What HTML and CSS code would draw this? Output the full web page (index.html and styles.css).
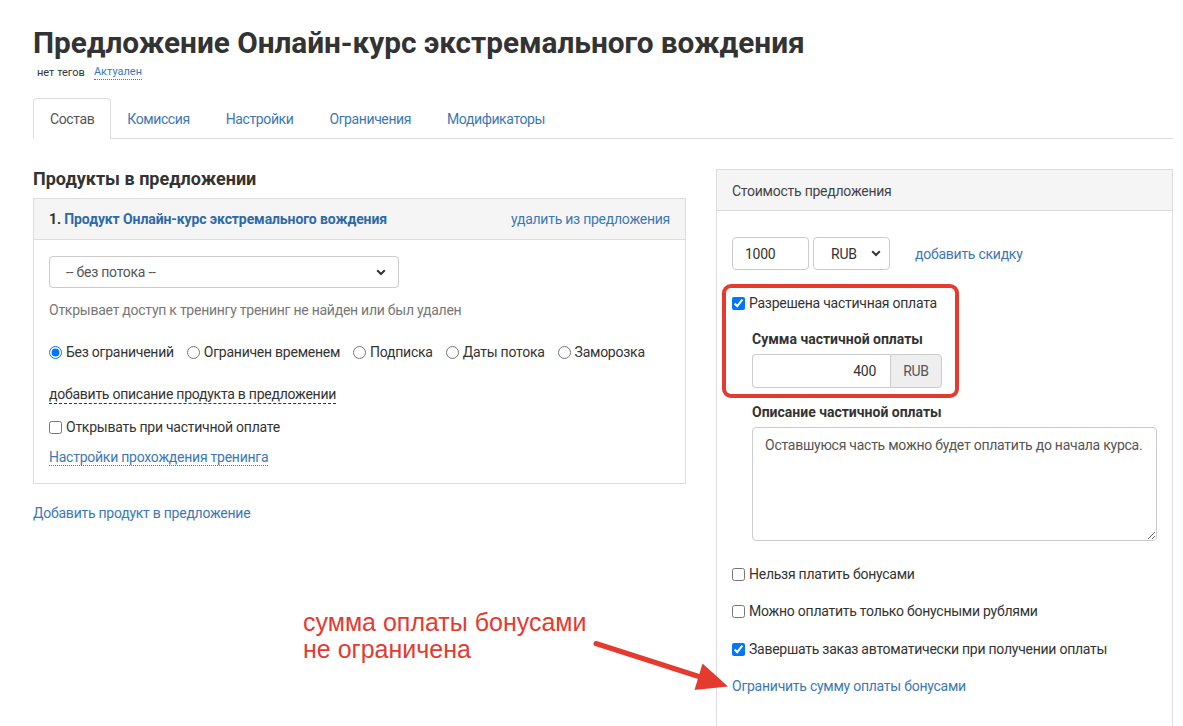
FILE: index.html
```html
<!DOCTYPE html>
<html lang="ru">
<head>
<meta charset="utf-8">
<title>Предложение</title>
<link rel="stylesheet" href="styles.css">
</head>
<body>
<div class="page">
  <h1 class="title">Предложение Онлайн-курс экстремального вождения</h1>
  <div class="tags"><span class="notags">нет тегов</span><a class="status">Актуален</a></div>

  <ul class="tabs">
    <li class="tab active">Состав</li>
    <li class="tab">Комиссия</li>
    <li class="tab">Настройки</li>
    <li class="tab">Ограничения</li>
    <li class="tab">Модификаторы</li>
  </ul>

  <div class="columns">
    <div class="left">
      <h3 class="section-title">Продукты в предложении</h3>
      <div class="panel">
        <div class="panel-heading product-heading">
          <span class="ph-title">1. <a class="prod-link">Продукт Онлайн-курс экстремального вождения</a></span>
          <a class="link">удалить из предложения</a>
        </div>
        <div class="panel-body product-body">
          <div class="select wide-select"><span>-- без потока --</span>
            <svg class="chev" width="10" height="7" viewBox="0 0 10 7"><path d="M1.2 1.3 L5 5 L8.8 1.3" fill="none" stroke="#333" stroke-width="2"/></svg>
          </div>
          <p class="help">Открывает доступ к тренингу тренинг не найден или был удален</p>
          <div class="radios">
            <label class="radio"><input type="radio" name="r" checked>Без ограничений</label>
            <label class="radio"><input type="radio" name="r">Ограничен временем</label>
            <label class="radio"><input type="radio" name="r">Подписка</label>
            <label class="radio"><input type="radio" name="r">Даты потока</label>
            <label class="radio"><input type="radio" name="r">Заморозка</label>
          </div>
          <div class="row-dashed"><a class="dashed">добавить описание продукта в предложении</a></div>
          <label class="check check-left"><input type="checkbox">Открывать при частичной оплате</label>
          <div class="row-dotted"><a class="dotted">Настройки прохождения тренинга</a></div>
        </div>
      </div>
      <a class="link add-link">Добавить продукт в предложение</a>
    </div>

    <div class="right">
      <div class="panel price-panel">
        <div class="panel-heading price-heading">Стоимость предложения</div>
        <div class="panel-body price-body">
          <div class="price-row">
            <div class="inp price-inp">1000</div>
            <div class="select cur-select"><span>RUB</span>
              <svg class="chev" width="10" height="7" viewBox="0 0 10 7"><path d="M1.2 1.3 L5 5 L8.8 1.3" fill="none" stroke="#333" stroke-width="2"/></svg>
            </div>
            <a class="link discount">добавить скидку</a>
          </div>
          <label class="check partial"><input type="checkbox" checked>Разрешена частичная оплата</label>
          <div class="sub">
            <div class="lbl lbl-sum">Сумма частичной оплаты</div>
            <div class="input-group">
              <div class="ig-inp">400</div>
              <div class="addon">RUB</div>
            </div>
            <div class="lbl lbl-desc">Описание частичной оплаты</div>
            <textarea class="ta">Оставшуюся часть можно будет оплатить до начала курса.</textarea>
          </div>
          <label class="check bonus1"><input type="checkbox">Нельзя платить бонусами</label>
          <label class="check bonus2"><input type="checkbox">Можно оплатить только бонусными рублями</label>
          <label class="check bonus3"><input type="checkbox" checked>Завершать заказ автоматически при получении оплаты</label>
          <div class="limit-row"><a class="link">Ограничить сумму оплаты бонусами</a></div>
        </div>
      </div>
    </div>
  </div>

  <div class="highlight"></div>
  <div class="note">сумма оплаты бонусами<br>не ограничена</div>
  <svg class="arrow" width="150" height="70" viewBox="590 630 150 70">
    <line x1="596" y1="643.5" x2="705" y2="678.5" stroke="#e53a30" stroke-width="5" stroke-linecap="round"/>
    <polygon points="728,686.5 702.5,663.5 694.5,690" fill="#e53a30"/>
  </svg>
</div>
</body>
</html>
```

FILE: styles.css
```css
* { box-sizing: border-box; }
html, body { margin: 0; padding: 0; background: #fff; }
body {
  font-family: "Roboto", "Liberation Sans", Arial, sans-serif;
  font-size: 14px;
  letter-spacing: -0.25px;
  color: #333;
  width: 1183px;
  height: 726px;
  overflow: hidden;
}
a { cursor: pointer; }
.page {
  position: relative;
  padding: 24px 10px 0 33px;
}
.title {
  margin: 0;
  font-size: 29.8px;
  line-height: 37px;
  font-weight: 700;
  letter-spacing: -0.05px;
  color: #333;
}
.tags {
  margin-top: 4px;
  padding-left: 4px;
  font-size: 11px;
  line-height: 16px;
  letter-spacing: 0;
  display: flex;
  gap: 9px;
}
.notags { color: #333; }
.status {
  color: #3c78b5;
  border-bottom: 1px dotted #3c78b5;
  line-height: 13px;
  height: 15px;
}
.tabs {
  list-style: none;
  margin: 17px 0 0 0;
  padding: 0;
  display: flex;
  width: 1140px;
  border-bottom: 1px solid #ddd;
}
.tab {
  height: 41px;
  padding: 0 15px;
  margin-right: 4px;
  display: flex;
  align-items: center;
  color: #3c78b5;
  letter-spacing: -0.4px;
  border: 1px solid transparent;
  border-radius: 4px 4px 0 0;
  margin-bottom: -1px;
}
.tab.active {
  color: #555;
  border-color: #ddd;
  border-bottom-color: #fff;
  background: #fff;
  padding: 0 16px;
  margin-right: 0;
}
.columns {
  display: flex;
  gap: 30px;
  margin-top: 30px;
  align-items: flex-start;
}
.left { width: 653px; }
.right { width: 457px; }
.section-title {
  margin: 0 0 9px 0;
  font-size: 18px;
  line-height: 20px;
  font-weight: 700;
  letter-spacing: 0;
  color: #333;
}
.panel {
  border: 1px solid #ddd;
  background: #fff;
}
.panel-heading {
  background: #f5f5f5;
  border-bottom: 1px solid #ddd;
  height: 41px;
  padding: 0 15px;
  display: flex;
  align-items: center;
}
.product-heading { justify-content: space-between; }
.ph-title { font-weight: 700; color: #333; letter-spacing: -0.1px; }
.prod-link { color: #2d6aa8; }
.link { color: #3c78b5; }
.panel-body { padding: 16px 15px; }
.product-body { padding-bottom: 16px; }
.select {
  display: flex;
  align-items: center;
  justify-content: space-between;
  border: 1px solid #ccc;
  border-radius: 4px;
  background: #fff;
  color: #555;
}
.wide-select {
  width: 350px;
  height: 32px;
  padding: 0 12px 0 16px;
}
.chev { display: block; }
.help {
  margin: 12px 0 0 0;
  line-height: 20px;
  color: #777;
}
.radios {
  display: flex;
  margin-top: 22px;
  line-height: 20px;
  white-space: nowrap;
}
.radio {
  display: flex;
  align-items: center;
  margin-right: 13px;
  flex-shrink: 0;
}
.radio input {
  margin: 0 4px 0 0;
  width: 13px;
  height: 13px;
}
.row-dashed { margin-top: 22px; line-height: 20px; }
.dashed {
  color: #333;
  border-bottom: 1px dashed #333;
  padding-bottom: 1px;
}
.check {
  display: flex;
  align-items: center;
  line-height: 20px;
  white-space: nowrap;
}
.check input {
  margin: 0 4px 0 0;
  width: 13px;
  height: 13px;
}
.check-left { margin-top: 13px; }
.row-dotted { margin-top: 10px; line-height: 20px; }
.dotted {
  color: #3c78b5;
  border-bottom: 1px dotted #3c78b5;
}
.add-link {
  display: block;
  margin-top: 19px;
  line-height: 20px;
}
.price-heading { color: #444; padding-top: 2px; }
.price-body { padding: 26px 15px 30px 15px; }
.price-row {
  display: flex;
  align-items: center;
}
.inp {
  border: 1px solid #ccc;
  border-radius: 4px;
  height: 33px;
  display: flex;
  align-items: center;
  color: #333;
}
.price-inp {
  width: 77px;
  padding-left: 12px;
}
.cur-select {
  width: 77px;
  height: 33px;
  margin-left: 4px;
  padding: 0 8px 0 17px;
  color: #333;
}
.discount { margin-left: 25px; }
.partial { margin-top: 23px; }
.sub {
  margin-left: 20px;
}
.lbl {
  font-weight: 700;
  line-height: 20px;
  color: #333;
  letter-spacing: 0;
}
.lbl-sum { margin-top: 16px; }
.input-group {
  display: flex;
  margin-top: 5px;
  width: 190px;
  height: 34px;
}
.ig-inp {
  flex: 1;
  border: 1px solid #ccc;
  border-right: none;
  border-radius: 4px 0 0 4px;
  display: flex;
  align-items: center;
  justify-content: flex-end;
  padding-right: 14px;
  color: #333;
}
.addon {
  width: 52px;
  border: 1px solid #ccc;
  border-radius: 0 4px 4px 0;
  background: #eee;
  color: #555;
  display: flex;
  align-items: center;
  justify-content: center;
}
.lbl-desc { margin-top: 14px; }
.ta {
  display: block;
  margin-top: 5px;
  width: 405px;
  height: 114px;
  border: 1px solid #ccc;
  border-radius: 4px;
  padding: 7px 12px;
  font-family: inherit;
  font-size: 14px;
  letter-spacing: -0.25px;
  line-height: 20px;
  color: #555;
  resize: vertical;
}
.bonus1 { margin-top: 23px; }
.bonus2 { margin-top: 17px; }
.bonus3 { margin-top: 18px; }
.limit-row { margin-top: 17px; line-height: 20px; }

.highlight {
  position: absolute;
  left: 722px;
  top: 284px;
  width: 237px;
  height: 114px;
  border: 4px solid #e53a30;
  border-radius: 9px;
}
.note {
  position: absolute;
  left: 303px;
  top: 609px;
  font-family: "Liberation Sans", Arial, sans-serif;
  font-size: 25px;
  line-height: 27px;
  letter-spacing: 0;
  color: #e53a30;
}
.arrow {
  position: absolute;
  left: 590px;
  top: 630px;
}
```
